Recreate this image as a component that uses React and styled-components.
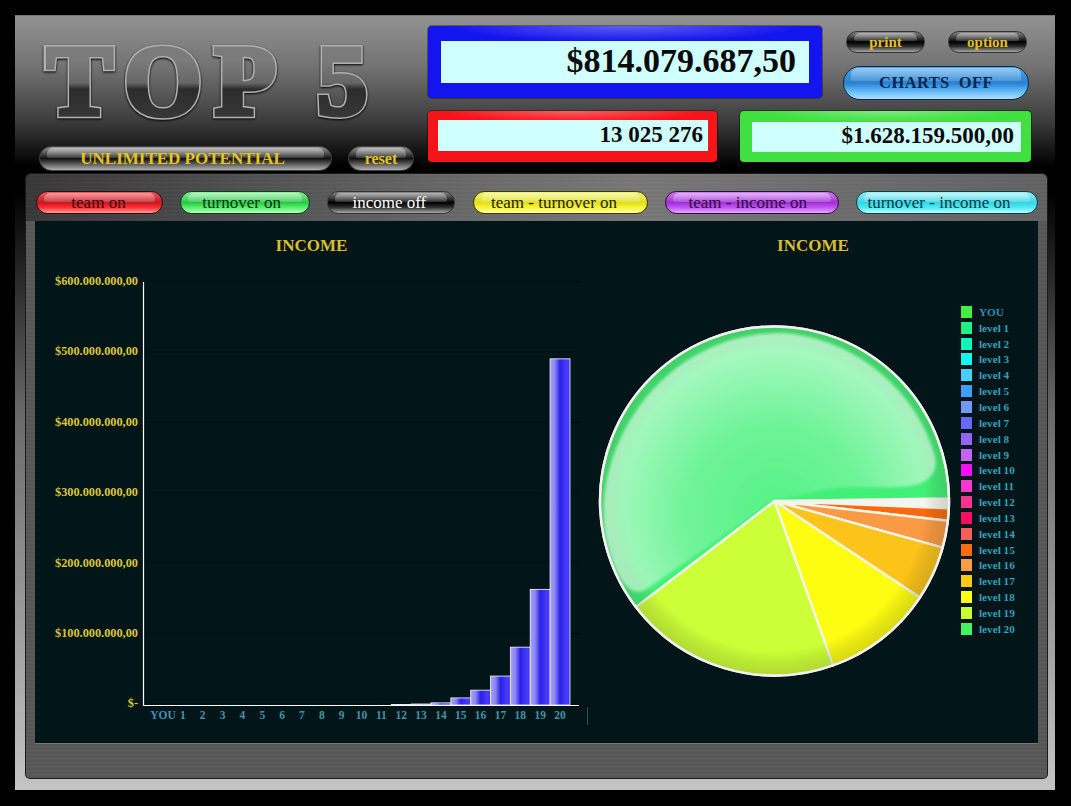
import React from 'react';
import styled, { createGlobalStyle } from 'styled-components';

const GlobalStyle = createGlobalStyle`
  html, body {
    margin: 0;
    padding: 0;
    background: #000;
  }
  body {
    font-family: "Liberation Serif", "Times New Roman", serif;
  }
`;

const tones = {
  red: { edge: '#2a0d0d', top: '#f8555a', mid: '#c01a24', low: '#ff2a30', rim: '#ff9a9a', text: '#3d0505' },
  green: { edge: '#123a1c', top: '#8cf59a', mid: '#2cc44a', low: '#50f064', rim: '#b8ffc0', text: '#08330f' },
  black: { edge: '#333', top: '#8a8a8a', mid: '#000', low: '#2c2c2c', rim: '#a8a8a8', text: '#fff' },
  gold: { edge: '#333', top: '#8a8a8a', mid: '#000', low: '#2c2c2c', rim: '#a8a8a8', text: '#e3c01c' },
  yellow: { edge: '#3a3a08', top: '#f4f470', mid: '#dede20', low: '#f5f530', rim: '#ffffa0', text: '#23230a' },
  purple: { edge: '#2c0c3c', top: '#d080f5', mid: '#a030d4', low: '#c050f0', rim: '#e4a8ff', text: '#2b0a40' },
  cyan: { edge: '#0c3c44', top: '#98f4fa', mid: '#38d4e2', low: '#48e8f2', rim: '#b8ffff', text: '#0a3a44' },
  blue: { edge: '#0c2c44', top: '#4aa6ee', mid: '#2a80d0', low: '#56b4f6', rim: '#b0e0ff', text: '#06284c' },
  gray: { edge: '#444', top: '#9a9a9a', mid: '#111', low: '#555', rim: '#b0b0b0', text: '#e6c41c' },
};

const Frame = styled.div`
  width: 1040px;
  height: 775px;
  margin: 15px 0 0 15px;
  box-sizing: border-box;
  display: flex;
  flex-direction: column;
  border-top: 1px solid #777;
  background: linear-gradient(180deg, #929292 0, #737373 50px, #3c3c3c 105px, #000 150px, #000 175px, #6a6a6a 400px, #bcbcbc 740px, #c4c4c4 100%);
`;

const Header = styled.header`
  height: 158px;
  box-sizing: border-box;
  flex: none;
  display: flex;
  padding: 10px 24px 3px 24px;
`;

const Brand = styled.div`
  width: 389px;
  flex: none;
  display: flex;
  flex-direction: column;
  justify-content: space-between;
`;

const Logo = styled.h1`
  position: relative;
  margin: 5px 0 0 7px;
  font-size: 100px;
  line-height: 100px;
  font-weight: 700;
  letter-spacing: 13px;
  word-spacing: -4px;
  white-space: nowrap;
  color: #b4b4b4;
  -webkit-text-stroke: 8px #b0b0b0;
  filter: drop-shadow(0 1px 1px #000);

  &::after {
    content: attr(data-text);
    position: absolute;
    left: 0;
    top: 0;
    color: transparent;
    background: linear-gradient(180deg, #7e7e7e 0, #7a7a7a 30%, #666 52%, #2c2c2c 58%, #3c3c3c 100%);
    -webkit-background-clip: text;
    background-clip: text;
    -webkit-text-stroke: 5px transparent;
  }
`;

const TagRow = styled.div`
  display: flex;
  gap: 16px;
`;

const Pill = styled.button`
  position: relative;
  width: ${(p) => p.$w}px;
  height: ${(p) => p.$h || 23}px;
  flex: none;
  padding: 0 ${(p) => p.$inset || 0}px 0 0;
  box-sizing: border-box;
  overflow: hidden;
  cursor: pointer;
  border: 1px solid ${(p) => tones[p.$tone].edge};
  border-radius: ${(p) => (p.$h || 23) / 2}px;
  background: linear-gradient(180deg, ${(p) => tones[p.$tone].top} 0, ${(p) => tones[p.$tone].mid} 50%, ${(p) => tones[p.$tone].low} 72%, ${(p) => tones[p.$tone].rim} 100%);
  color: ${(p) => tones[p.$tone].text};
  font-family: "Liberation Serif", "Times New Roman", serif;
  font-size: ${(p) => p.$size || 17}px;
  font-weight: ${(p) => (p.$bold ? 700 : 400)};
  letter-spacing: ${(p) => p.$track || 0}px;
  line-height: 1;
  white-space: nowrap;

  &::before {
    content: '';
    position: absolute;
    left: 7px;
    right: 7px;
    top: 1px;
    height: 42%;
    border-radius: 6px 6px 2px 2px;
    background: linear-gradient(180deg, rgba(255, 255, 255, 0.42), rgba(255, 255, 255, 0.14));
  }
`;

const PillText = styled.span`
  position: relative;
`;

const Readouts = styled.div`
  width: 603px;
  flex: none;
  display: flex;
  flex-direction: column;
  gap: 11px;
`;

const TopRow = styled.div`
  display: flex;
  gap: 21px;
`;

const BottomRow = styled.div`
  display: flex;
  justify-content: space-between;
`;

const Readout = styled.div`
  position: relative;
  width: ${(p) => p.$w}px;
  height: ${(p) => p.$h}px;
  flex: none;
  box-sizing: border-box;
  padding: ${(p) => p.$pad};
  border-radius: 4px;
  box-shadow: 0 0 0 1px rgba(0, 0, 0, 0.35);
  background:
    radial-gradient(ellipse 45% 22% at 50% 0, rgba(255, 255, 255, 0.32), rgba(255, 255, 255, 0) 100%),
    ${(p) => p.$color};
`;

const ReadoutValue = styled.div`
  height: 100%;
  box-sizing: border-box;
  display: flex;
  align-items: center;
  justify-content: flex-end;
  padding: 0 ${(p) => p.$right}px 2px 0;
  background: #d0ffff;
  color: #0a0a0a;
  font-size: ${(p) => p.$size}px;
  font-weight: 700;
  white-space: nowrap;
`;

const ButtonColumn = styled.div`
  width: 186px;
  flex: none;
  padding-top: 5px;
  display: flex;
  flex-direction: column;
  gap: 13px;
`;

const SmallButtons = styled.div`
  display: flex;
  justify-content: space-between;
  padding: 0 2px 0 3px;
`;

const Panel = styled.main`
  flex: 1;
  margin: 0 8px 12px 11px;
  padding: 17px 9px 35px;
  display: flex;
  flex-direction: column;
  border-radius: 5px 5px 4px 4px;
  box-shadow: 0 0 0 1px #1a1a1a;
  background:
    repeating-linear-gradient(180deg, rgba(255, 255, 255, 0.02) 0, rgba(255, 255, 255, 0.02) 1px, rgba(0, 0, 0, 0.025) 2px, rgba(0, 0, 0, 0.025) 4px),
    linear-gradient(90deg, #383838 0, #6c6c6c 45%, #787878 60%, #626262 100%) top / 100% 47px no-repeat,
    #585858;
`;

const ToggleBar = styled.nav`
  display: flex;
  justify-content: space-between;
  margin: 0 0 7px 1px;
`;

const ChartArea = styled.section`
  flex: 1;
  display: grid;
  grid-template-columns: 553px 450px;
  background: #02161a;
  box-shadow: 0 1px 0 #777;
`;

const ChartColumn = styled.div`
  display: flex;
  flex-direction: column;
  min-width: 0;
`;

const ChartTitle = styled.h2`
  height: 48px;
  margin: 0;
  box-sizing: border-box;
  padding-top: 16px;
  text-align: center;
  font-size: 17px;
  line-height: 18px;
  font-weight: 700;
  color: #dcbd30;
`;

const BarSvg = styled.svg`
  display: block;
  width: 553px;
  height: 474px;
  font-family: "Liberation Serif", "Times New Roman", serif;
`;

const PieRow = styled.div`
  display: flex;
  align-items: flex-start;
`;

const PieSvg = styled.svg`
  display: block;
  width: 360px;
  height: 360px;
  margin: 52px 0 0 7px;
  flex: none;
`;

const Legend = styled.ul`
  list-style: none;
  margin: 35px 0 0 6px;
  padding: 0;
`;

const LegendRow = styled.li`
  display: flex;
  align-items: center;
  gap: 7px;
  height: 15.85px;
  font-size: 11.2px;
  font-weight: 700;
  color: ${(p) => (p.$you ? '#2b8cb5' : '#2fa0bd')};
  white-space: nowrap;
`;

const Swatch = styled.span`
  width: 11px;
  height: 12px;
  flex: none;
  background: ${(p) => p.$color};
`;

const toggles = [
  { label: 'team on', tone: 'red', w: 127, inset: 2 },
  { label: 'turnover on', tone: 'green', w: 130, inset: 7 },
  { label: 'income off', tone: 'black', w: 128, inset: 4 },
  { label: 'team - turnover on', tone: 'yellow', w: 175, inset: 12 },
  { label: 'team - income on', tone: 'purple', w: 174, inset: 8 },
  { label: 'turnover - income on', tone: 'cyan', w: 182, inset: 16 },
];

const legendItems = [
  ['YOU', '#44ee44'], ['level 1', '#1ff084'], ['level 2', '#10f4bc'], ['level 3', '#10f6f0'],
  ['level 4', '#48d0fc'], ['level 5', '#409efc'], ['level 6', '#7099fc'], ['level 7', '#6868fc'],
  ['level 8', '#9464f8'], ['level 9', '#c464f8'], ['level 10', '#f410f4'], ['level 11', '#f838cc'],
  ['level 12', '#f83490'], ['level 13', '#f81060'], ['level 14', '#f85c5c'], ['level 15', '#fc6c10'],
  ['level 16', '#fc9c44'], ['level 17', '#fcc814'], ['level 18', '#fefe10'], ['level 19', '#c8fc30'],
  ['level 20', '#40f464'],
];

// income per level in millions, everything below level 12 is too small to see
const barValues = { 12: 0.7, 13: 1.4, 14: 3, 15: 10, 16: 21, 17: 41, 18: 82, 19: 164, 20: 491 };
const yLabels = ['$600.000.000,00', '$500.000.000,00', '$400.000.000,00', '$300.000.000,00', '$200.000.000,00', '$100.000.000,00', '$-'];
const xLabels = ['YOU', ...Array.from({ length: 20 }, (_, i) => String(i + 1))];

const BAR_BASE = 436;
const BAR_SCALE = 0.705;
const xFor = (i) => 128 + i * 19.85;

const BarChart = () => (
  <BarSvg viewBox="0 0 553 474">
    <defs>
      <linearGradient id="barFill" x1="0" x2="1" y1="0" y2="0">
        <stop offset="0" stopColor="#a8a4f6" />
        <stop offset="0.25" stopColor="#8a84f0" />
        <stop offset="0.5" stopColor="#2a20e8" />
        <stop offset="0.85" stopColor="#4a3cf8" />
        <stop offset="1" stopColor="#3b30f0" />
      </linearGradient>
    </defs>
    {yLabels.map((_, i) => (
      <line key={i} x1="110" x2="545" y1={12.5 + i * 70.4} y2={12.5 + i * 70.4} stroke="#000" strokeOpacity="0.35" />
    ))}
    {Object.entries(barValues).map(([level, value]) => {
      const h = value * BAR_SCALE;
      return (
        <rect
          key={level}
          x={xFor(Number(level)) - 9.9}
          y={BAR_BASE - h}
          width="19.85"
          height={h}
          fill="url(#barFill)"
          stroke="#e8e8ff"
          strokeWidth="0.9"
        />
      );
    })}
    <line x1="108.5" x2="108.5" y1="13" y2={BAR_BASE + 0.5} stroke="#fff" strokeWidth="1.2" />
    <line x1="108" x2="544" y1={BAR_BASE + 0.5} y2={BAR_BASE + 0.5} stroke="#fff" strokeWidth="1.2" />
    <line x1="552.5" x2="552.5" y1="438" y2="456" stroke="#3a4a4e" />
    {yLabels.map((label, i) => (
      <text key={label} x="103" y={16 + i * 70.4} textAnchor="end" fontSize="12.3" fontWeight="700" fill="#d8c638">
        {label}
      </text>
    ))}
    {xLabels.map((label, i) => (
      <text key={label} x={xFor(i)} y="450" textAnchor="middle" fontSize="11.5" fontWeight="700" fill={i === 0 ? '#3f8fb8' : '#3e94a8'}>
        {label}
      </text>
    ))}
  </BarSvg>
);

const CX = 179.5;
const CY = 180;
const R = 174.5;

const pointAt = (deg, r = R) => {
  const a = (deg * Math.PI) / 180;
  return [CX + r * Math.cos(a), CY + r * Math.sin(a)];
};

const wedge = (from, to) => {
  const [x1, y1] = pointAt(from);
  const [x2, y2] = pointAt(to);
  const large = to - from > 180 ? 1 : 0;
  return `M${CX} ${CY} L${x1} ${y1} A${R} ${R} 0 ${large} 1 ${x2} ${y2} Z`;
};

const slices = [
  { from: -0.8, to: 2.4, color: '#f4f4f4' },
  { from: 2.4, to: 6.5, color: '#f9690e' },
  { from: 6.5, to: 15.5, color: '#fa9a45' },
  { from: 15.5, to: 33.6, color: '#fcc31b' },
  { from: 33.6, to: 70.4, color: '#fdfd12' },
  { from: 70.4, to: 142.6, color: '#ccff38' },
  { from: 142.6, to: 359.2, color: '#42f078' },
];

const PieChart = () => (
  <PieSvg viewBox="0 0 360 360">
    <defs>
      <radialGradient id="pieGloss" gradientUnits="userSpaceOnUse" cx="180" cy="190" r="175">
        <stop offset="0" stopColor="#fff" stopOpacity="0.1" />
        <stop offset="0.5" stopColor="#fff" stopOpacity="0.24" />
        <stop offset="1" stopColor="#fff" stopOpacity="0.58" />
      </radialGradient>
      <radialGradient id="pieRim" cx="0.5" cy="0.5" r="0.5">
        <stop offset="0.86" stopColor="#000" stopOpacity="0" />
        <stop offset="1" stopColor="#4a4a20" stopOpacity="0.2" />
      </radialGradient>
      <filter id="glossBlur" x="-5%" y="-5%" width="110%" height="110%">
        <feGaussianBlur stdDeviation="1.8" />
      </filter>
    </defs>
    {slices.map((s) => (
      <path key={s.color} d={wedge(s.from, s.to)} fill={s.color} stroke="#f4f4ea" strokeWidth="2.4" strokeLinejoin="round" />
    ))}
    <circle cx={CX} cy={CY} r={R} fill="url(#pieRim)" />
    <path
      d="M188 12 C 260 17 322 70 340 135 C 344 155 330 165 305 166 C 280 167 250 164 228 169 C 210 173 195 176 178 180 L 52 268 C 32 280 20 250 13 225 C -10 140 60 11 188 12 Z"
      fill="url(#pieGloss)"
      filter="url(#glossBlur)"
    />
    <circle cx={CX} cy={CY} r={R} fill="none" stroke="#f0f0f0" strokeWidth="2.4" />
  </PieSvg>
);

const App = () => (
  <>
    <GlobalStyle />
    <Frame>
      <Header>
        <Brand>
          <Logo data-text="TOP 5">TOP 5</Logo>
          <TagRow>
            <Pill $w={293} $h={25} $tone="gray" $size={17} $bold $inset={6}>
              <PillText>UNLIMITED POTENTIAL</PillText>
            </Pill>
            <Pill $w={66} $h={25} $tone="gray" $size={16} $bold>
              <PillText>reset</PillText>
            </Pill>
          </TagRow>
        </Brand>
        <Readouts>
          <TopRow>
            <Readout $w={394} $h={72} $color="#1414ee" $pad="15px 13px 15px 13px">
              <ReadoutValue $size={34} $right={13}>$814.079.687,50</ReadoutValue>
            </Readout>
            <ButtonColumn>
              <SmallButtons>
                <Pill $w={79} $h={22} $tone="gold" $size={15} $bold>
                  <PillText>print</PillText>
                </Pill>
                <Pill $w={79} $h={22} $tone="gold" $size={15} $bold>
                  <PillText>option</PillText>
                </Pill>
              </SmallButtons>
              <Pill $w={186} $h={34} $tone="blue" $size={16.5} $bold $track={0.4}>
                <PillText>CHARTS&nbsp; OFF</PillText>
              </Pill>
            </ButtonColumn>
          </TopRow>
          <BottomRow>
            <Readout $w={289} $h={51} $color="#f5141a" $pad="9px 9px 11px 10px">
              <ReadoutValue $size={23} $right={5}>13 025 276</ReadoutValue>
            </Readout>
            <Readout $w={291} $h={51} $color="#3fe03f" $pad="11px 10px 10px 12px">
              <ReadoutValue $size={23} $right={7}>$1.628.159.500,00</ReadoutValue>
            </Readout>
          </BottomRow>
        </Readouts>
      </Header>
      <Panel>
        <ToggleBar>
          {toggles.map((t) => (
            <Pill key={t.label} $w={t.w} $tone={t.tone} $inset={t.inset}>
              <PillText>{t.label}</PillText>
            </Pill>
          ))}
        </ToggleBar>
        <ChartArea>
          <ChartColumn>
            <ChartTitle>INCOME</ChartTitle>
            <BarChart />
          </ChartColumn>
          <ChartColumn>
            <ChartTitle>INCOME</ChartTitle>
            <PieRow>
              <PieChart />
              <Legend>
                {legendItems.map(([label, color]) => (
                  <LegendRow key={label} $you={label === 'YOU'}>
                    <Swatch $color={color} />
                    {label}
                  </LegendRow>
                ))}
              </Legend>
            </PieRow>
          </ChartColumn>
        </ChartArea>
      </Panel>
    </Frame>
  </>
);

export default App;
